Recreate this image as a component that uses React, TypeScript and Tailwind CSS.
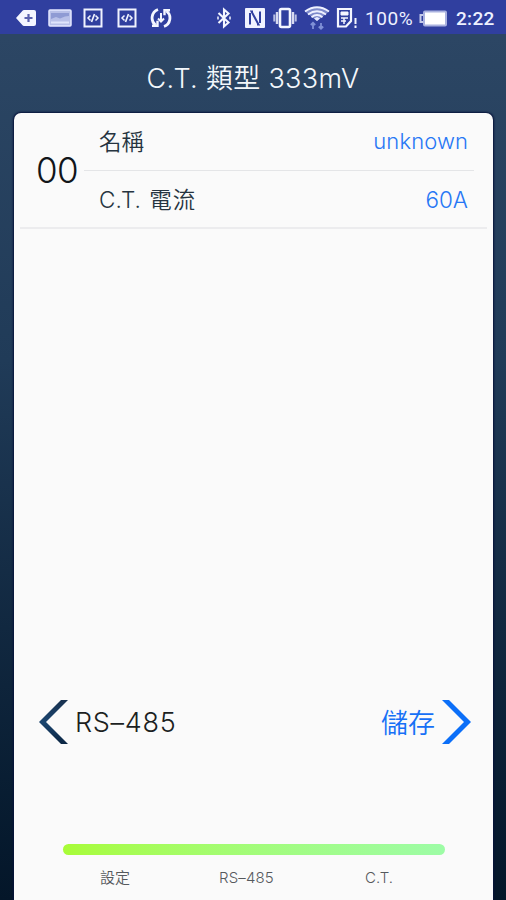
import React from 'react';

interface RowProps {
  label: React.ReactNode;
  value: string;
  valueClass: string;
}

interface Step {
  id: string;
  label: string;
  className: string;
}

const STEPS: Step[] = [
  { id: 'setup', label: '設定', className: 'left-[100px] font-[350]' },
  { id: 'rs485', label: 'RS–485', className: 'left-[219px] tracking-[0.15px]' },
  { id: 'ct', label: 'C.T.', className: 'left-[365px]' },
];

function CodeIcon() {
  return (
    <svg width="20" height="20" viewBox="0 0 20 20" fill="none" stroke="#f0f3ff" strokeWidth="2">
      <rect x="1.5" y="1.5" width="17" height="17" />
      <path d="M7.5 7.5 5 10l2.5 2.5M12.5 7.5 15 10l-2.5 2.5" strokeWidth="1.5" />
      <path d="M11.5 6 8.5 14" strokeWidth="1.7" />
    </svg>
  );
}

function StatusBar() {
  return (
    <div className="flex h-[34px] shrink-0 items-center bg-[#303f9f] pt-[2px] text-[#eef1ff]">
      {/* Notifications */}
      <svg className="ml-[16px]" width="20" height="16" viewBox="0 0 20 16">
        <path d="M0 8 6.5.8Q7 0 8 0h10q2 0 2 2v12q0 2-2 2H8q-1 0-1.5-.8z" fill="#f4f6ff" />
        <path d="M12.5 4v8M8.5 8h8" stroke="#5a62ae" strokeWidth="2.2" />
      </svg>
      <svg className="ml-[12px]" width="24" height="18" viewBox="0 0 24 18">
        <rect x="1" y="1" width="22" height="16" rx="1" fill="#b8c0e8" stroke="#e3e8ff" strokeWidth="1.5" />
        <path d="M3 4h18v3l-4 .5-5 2L8 8l-5 2z" fill="#8f9bd4" />
        <path d="M3 13.5h18" stroke="#dfe4fb" strokeWidth="2" />
      </svg>
      <div className="ml-[11px]"><CodeIcon /></div>
      <div className="ml-[14px]"><CodeIcon /></div>
      <svg className="ml-[13px]" width="22" height="22" viewBox="0 0 22 22" fill="none" stroke="#f4f6ff" strokeWidth="2.8">
        <path d="M8 2.5A9 9 0 0 0 5.5 18M14 19.5A9 9 0 0 0 16.5 4" />
        <path d="M2 18.8h5.5v-5M20 3.2h-5.5v5" strokeWidth="2.4" />
        <path d="M11 6v8M8 11.5l3 3 3-3" strokeWidth="2" />
      </svg>

      {/* System */}
      <svg className="ml-[45px]" width="14" height="22" viewBox="0 0 14 22" fill="none" stroke="#f4f6ff" strokeWidth="2.1">
        <path d="M1.5 6 11.5 15.5l-4.500 4V2.5l4.500 4L1.5 16" />
        <path d="M1 9.5v3M13 9.5v3" strokeWidth="1.5" />
      </svg>
      <svg className="ml-[14px]" width="20" height="20" viewBox="0 0 20 20">
        <rect width="20" height="20" rx="1" fill="#f1f3ff" />
        <path d="M5 16.500V5M8 3.500h-1.500L13.500 16.500H12M15 3.500V15" fill="none" stroke="#303f9f" strokeWidth="2" />
      </svg>
      <svg className="ml-[8px]" width="24" height="22" viewBox="0 0 24 22" fill="none" stroke="#f4f6ff">
        <rect x="7" y="2" width="10" height="18" rx="1.5" strokeWidth="2.6" />
        <path d="M4 5v12M20 5v12" strokeWidth="2.4" opacity=".85" />
        <path d="M1.3 7.5v7M22.7 7.5v7" strokeWidth="2" opacity=".7" />
      </svg>
      <svg className="ml-[7px]" width="26" height="24" viewBox="0 0 26 24" fill="none">
        <path d="M1 5.5Q13-3 25 5.5L13 15z" fill="#7d8acb" />
        <path d="M1 5.5Q13-3 25 5.5M4 8.5q9-6.500 18 0M7.5 11.3q5.500-4.500 11 0" stroke="#eef1ff" strokeWidth="1.8" />
        <path d="m10 12.5 3-1.5 3 1.5-3 2.5z" fill="#e5e9ff" />
        <path d="M9 23v-6M6.8 19 9 16.800l2.200 2.200M17 17v6M14.8 20.500 17 22.700l2.200-2.200" stroke="#7f90d6" strokeWidth="1.8" />
      </svg>
      <svg className="ml-[6px]" width="22" height="22" viewBox="0 0 22 22" fill="none" stroke="#f4f6ff">
        <path d="M2 2h13v12l-5 5.500H2z" strokeWidth="2.2" />
        <path d="M5 5h7v3H5z" fill="#f4f6ff" />
        <path d="M5 11h7M5 14h5M8 11v6" strokeWidth="1.5" />
        <path d="M19.5 11v6M19.5 18.500v2.500" strokeWidth="2" />
      </svg>
      <span className="ml-[7px] w-[50px] whitespace-nowrap pt-[1px] font-[Roboto] text-[19px] font-normal leading-none tracking-[0.6px]">
        100%
      </span>
      <svg className="ml-[4px]" width="29" height="17" viewBox="0 0 29 17">
        <rect x="5" y="1.5" width="22" height="14" rx="1" fill="#fff" stroke="#aab2df" strokeWidth="2" />
        <path d="M4 5H1.5v7H4" fill="none" stroke="#c5cbea" strokeWidth="2" />
      </svg>
      <span className="ml-[8px] whitespace-nowrap pt-[1px] font-[Roboto] text-[19px] font-medium leading-none tracking-[0.3px]">
        2:22
      </span>
    </div>
  );
}

function Row({ label, value, valueClass }: RowProps) {
  return (
    <div className="flex h-[57px] items-center justify-between pl-[15px] pr-[6px]">
      <span className="whitespace-nowrap text-[22.5px] text-[#263440]">{label}</span>
      <span className={`text-[#2777f5] ${valueClass}`}>{value}</span>
    </div>
  );
}

export default function App() {
  return (
    <div className="flex h-[900px] w-[506px] flex-col overflow-hidden bg-linear-to-b from-[#2c4664] from-[4%] via-[#203b58] via-[40%] to-[#041629] font-['Inter','Noto_Sans_CJK_TC',sans-serif] font-light">
      <StatusBar />

      <header className="flex h-[79px] shrink-0 items-center justify-center pt-[9px]">
        <h1 className="whitespace-pre text-[27px] leading-none tracking-[0.3px] text-[#f3f7fb]">
          C.T. <span className="font-[350]">類型</span> 333mV
        </h1>
      </header>

      {/* Card */}
      <main className="ml-[14px] flex w-[479px] flex-1 flex-col rounded-t-[7px] bg-[#fafafa] shadow-[0_0_2px_1px_#06123a]">
        <section className="mx-[6px] flex h-[116px] shrink-0 border-b-2 border-[#ececee]">
          <div className="flex w-[64px] items-center pl-[16px] text-[35px] tracking-[-0.5px] text-[#111519]">00</div>
          <div className="w-[390px]">
            <Row label={<span className="font-[350]">名稱</span>} value="unknown" valueClass="text-[22px] tracking-[0.1px]" />
            <div className="h-px bg-[#e4e5e7]" />
            <Row
              label={<>C.T. <span className="ml-[2px] font-[350] tracking-[1px]">電流</span></>}
              value="60A"
              valueClass="text-[22.5px]"
            />
          </div>
        </section>

        <div className="flex-1" />

        {/* Prev / save */}
        <nav className="flex h-[48px] shrink-0 items-center justify-between pl-[25px] pr-[22px]">
          <button className="flex items-center">
            <svg width="29" height="46" viewBox="0 0 29 46">
              <defs>
                <linearGradient id="back" x1="0" y1="0" x2="0" y2="1">
                  <stop offset="0" stopColor="#18314f" />
                  <stop offset=".5" stopColor="#1a456f" />
                  <stop offset="1" stopColor="#0b2542" />
                </linearGradient>
              </defs>
              <path d="M22 1h7L7 23l22 22h-7L0 23z" fill="url(#back)" />
            </svg>
            <span className="ml-[7px] pt-[2px] text-[27px] tracking-[0.7px] text-[#1c1f22]">RS–485</span>
          </button>
          <button className="flex items-center">
            <span className="mr-[7px] pt-[4px] text-[27px] font-[350] text-[#1670f6]">儲存</span>
            <svg width="29" height="46" viewBox="0 0 29 46">
              <path d="M7 1H0l22 22L0 45h7l22-22z" fill="#0b6ff8" />
            </svg>
          </button>
        </nav>

        {/* Wizard progress */}
        <footer className="mt-[98px] h-[56px] shrink-0">
          <div className="ml-[49px] h-[11px] w-[382px] rounded-full bg-linear-to-r from-[#a8fc36] to-[#9dfca6]" />
          <div className="relative -ml-[14px] mt-[13px] h-[20px] text-[15px] leading-[20px] text-[#55595d]">
            {STEPS.map(step => (
              <span key={step.id} className={`absolute top-0 whitespace-nowrap ${step.className}`}>
                {step.label}
              </span>
            ))}
          </div>
        </footer>
      </main>
    </div>
  );
}
